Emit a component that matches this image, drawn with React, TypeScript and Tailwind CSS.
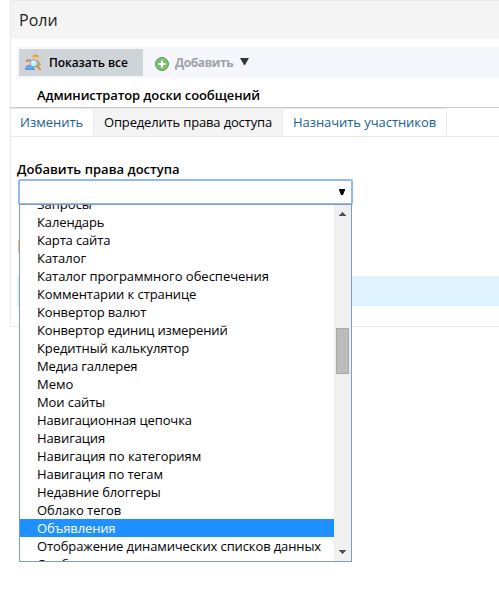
const items: { name: string; fit: string }[] = [
  { name: 'Запросы', fit: 'tracking-normal' },
  { name: 'Календарь', fit: 'tracking-[-0.12px]' },
  { name: 'Карта сайта', fit: 'tracking-[-0.15px]' },
  { name: 'Каталог', fit: 'tracking-[-0.05px]' },
  { name: 'Каталог программного обеспечения', fit: 'tracking-[-0.02px]' },
  { name: 'Комментарии к странице', fit: 'tracking-[-0.08px]' },
  { name: 'Конвертор валют', fit: 'tracking-[-0.12px]' },
  { name: 'Конвертор единиц измерений', fit: 'tracking-[-0.15px]' },
  { name: 'Кредитный калькулятор', fit: 'tracking-[-0.08px]' },
  { name: 'Медиа галлерея', fit: 'tracking-[-0.18px]' },
  { name: 'Мемо', fit: 'tracking-normal' },
  { name: 'Мои сайты', fit: 'tracking-[-0.1px]' },
  { name: 'Навигационная цепочка', fit: 'tracking-[-0.1px]' },
  { name: 'Навигация', fit: 'tracking-[-0.1px]' },
  { name: 'Навигация по категориям', fit: 'tracking-[-0.05px]' },
  { name: 'Навигация по тегам', fit: 'tracking-[-0.08px]' },
  { name: 'Недавние блоггеры', fit: 'tracking-[-0.12px]' },
  { name: 'Облако тегов', fit: 'tracking-[-0.05px]' },
  { name: 'Объявления', fit: 'tracking-[-0.15px]' },
  { name: 'Отображение динамических списков данных', fit: 'tracking-[-0.12px]' },
  { name: 'Отображение', fit: 'tracking-normal' },
];

function RolesIcon() {
  return (
    <svg width="17" height="17" viewBox="0 0 17 17" className="shrink-0">
      <path d="M7.5 9Q8 6.5 10.5 6.5Q15 6.5 15.5 11L13 12H8Z" fill="#9cbf6a" stroke="#d08a3c" strokeWidth=".6" />
      <circle cx="10.5" cy="3.9" r="2.9" fill="#f6c894" />
      <path d="M7.3 4.2Q7 .3 10.5 .4Q14 .3 13.8 4.2Q12.7 2.2 10.5 3.2Q8.5 2.4 7.3 4.2Z" fill="#e6a13c" />
      <circle cx="3.8" cy="8.2" r="2.7" fill="#f3cdaa" />
      <path d="M1 8.5Q.8 5.2 3.8 5.2Q6.6 5.2 6.5 8Q4.5 6.5 2.5 7.4Z" fill="#b98262" />
      <path d="M.5 15.5Q.8 11.3 4 11.3L8 13L9.5 15.5Z" fill="#6ba8ef" stroke="#427dcc" strokeWidth=".7" />
      <path d="M11.8 12L15 15.2" stroke="#e28a3c" strokeWidth="2" strokeLinecap="round" />
      <circle cx="8.8" cy="9.3" r="3.6" fill="#c9f0fc" stroke="#7ba5c0" strokeWidth="1.1" />
      <path d="M6.9 9Q7.2 7.3 9 7.2" stroke="#fff" strokeWidth="1" fill="none" />
    </svg>
  );
}

function AddIcon() {
  return (
    <svg width="14" height="14" viewBox="0 0 14 14" className="mt-[2px] shrink-0">
      <circle cx="7" cy="7" r="6.4" fill="#69b55d" stroke="#4b914a" strokeWidth="1" />
      <circle cx="7" cy="7" r="5.3" fill="#71bd62" stroke="#a5d69c" strokeWidth=".6" />
      <path d="M7 3.5V10.5M3.5 7H10.5" stroke="#fff" strokeWidth="2.2" />
    </svg>
  );
}

function Dropdown() {
  return (
    <div className="absolute left-px top-[25px] flex h-[358px] w-[333px] overflow-hidden border border-[#7f9db9] bg-white">
      <ul className="-mt-[10px] flex-1 text-[13px] leading-[18px] text-black">
        {items.map(({ name, fit }, i) => (
          <li
            key={i}
            className={`h-[18px] whitespace-nowrap pl-[17px] ${fit} ${
              name === 'Объявления' ? 'bg-[#1e90ff] text-white' : ''
            }`}
          >
            {name}
          </li>
        ))}
      </ul>
      <div className="flex w-[17px] shrink-0 flex-col items-center bg-[#f0f0f0]">
        <svg width="7" height="4" viewBox="0 0 7 4" shapeRendering="crispEdges" className="mt-[7px]">
          <path d="M3 0h1v1h1v1h1v1h1v1H0V3h1V2h1V1h1z" fill="#505050" />
        </svg>
        <div className="mt-[112px] h-[46px] w-[13px] border border-[#a8a8a8] bg-[#bcbcbc]" />
        <svg width="7" height="4" viewBox="0 0 7 4" shapeRendering="crispEdges" className="mb-[7px] mt-auto">
          <path d="M0 0h7v1H6v1H5v1H4v1H3V3H2V2H1V1H0z" fill="#505050" />
        </svg>
      </div>
    </div>
  );
}

export default function App() {
  return (
    <div className="h-[603px] w-[499px] overflow-hidden bg-white pl-[10px] font-['Open_Sans','Noto_Sans',sans-serif] text-[13px] text-black">
      <div className="h-[107px] border-l border-t border-[#eaeaea]">
        <header className="flex h-[38px] items-center bg-[#f4f4f4] pl-2 text-[16px] text-[#222]">Роли</header>
        <div className="ml-[6px] mt-2 flex h-[31px] items-center bg-[#f5f7fc] pl-[2px]">
          <button className="flex h-[27px] w-[124px] items-center bg-[#ced4d7] pl-[6px]">
            <RolesIcon />
            <span className="ml-[7px] whitespace-nowrap text-[12px] font-semibold tracking-[-0.08px]">Показать все</span>
          </button>
          <button className="ml-3 flex items-center text-[#9ea3a8]">
            <AddIcon />
            <span className="ml-[6px] w-[58px] whitespace-nowrap text-[12px] font-bold tracking-[-0.4px]">Добавить</span>
            <svg width="9" height="7" viewBox="0 0 9 7" className="-mt-[2px] ml-[7px]">
              <path d="M0 0H9L5 7H4Z" fill="#363636" />
            </svg>
          </button>
        </div>
        <h2 className="ml-[26px] mt-[8px] text-[13px] font-semibold leading-[18px] tracking-[-0.1px]">Администратор доски сообщений</h2>
      </div>
      <nav className="flex h-[29px] border-t border-[#c8c8c8] text-[13px] leading-[27px] text-[#176093]">
        <a className="w-[83px] border-l border-t border-[#eaeaea] pl-[9px]">Изменить</a>
        <a className="w-[189px] border-l border-t border-[#eaeaea] bg-[#f4f4f4] pl-[10px] tracking-[-0.16px] text-black">Определить права доступа</a>
        <a className="w-[165px] border-x border-t border-[#eaeaea] pl-[10px] tracking-[-0.06px]">Назначить участников</a>
      </nav>
      <main className="flex h-[191px] flex-col border-y border-l border-[#eaeaea] pl-[6px]">
        <label className="mt-[23px] text-[13px] font-semibold leading-[18px] tracking-[0.04px]">Добавить права доступа</label>
        <div className="relative z-10 ml-px mt-px h-[26px] w-[335px] rounded-[2px] border-2 border-[#94b8f4] bg-white">
          <svg width="6" height="6" viewBox="0 0 6 6" className="ml-[319px] mt-2">
            <path d="M0 0H6V1L4 6H2L0 1Z" fill="#000" />
          </svg>
          <div className="absolute -left-[2px] -top-[2px]">
            <Dropdown />
          </div>
        </div>
        <div className="ml-px mt-[35px] h-[13px] w-4 bg-[#ffbd77]" />
        <div className="mt-[23px] h-[30px] bg-[#dff3ff]" />
      </main>
    </div>
  );
}
